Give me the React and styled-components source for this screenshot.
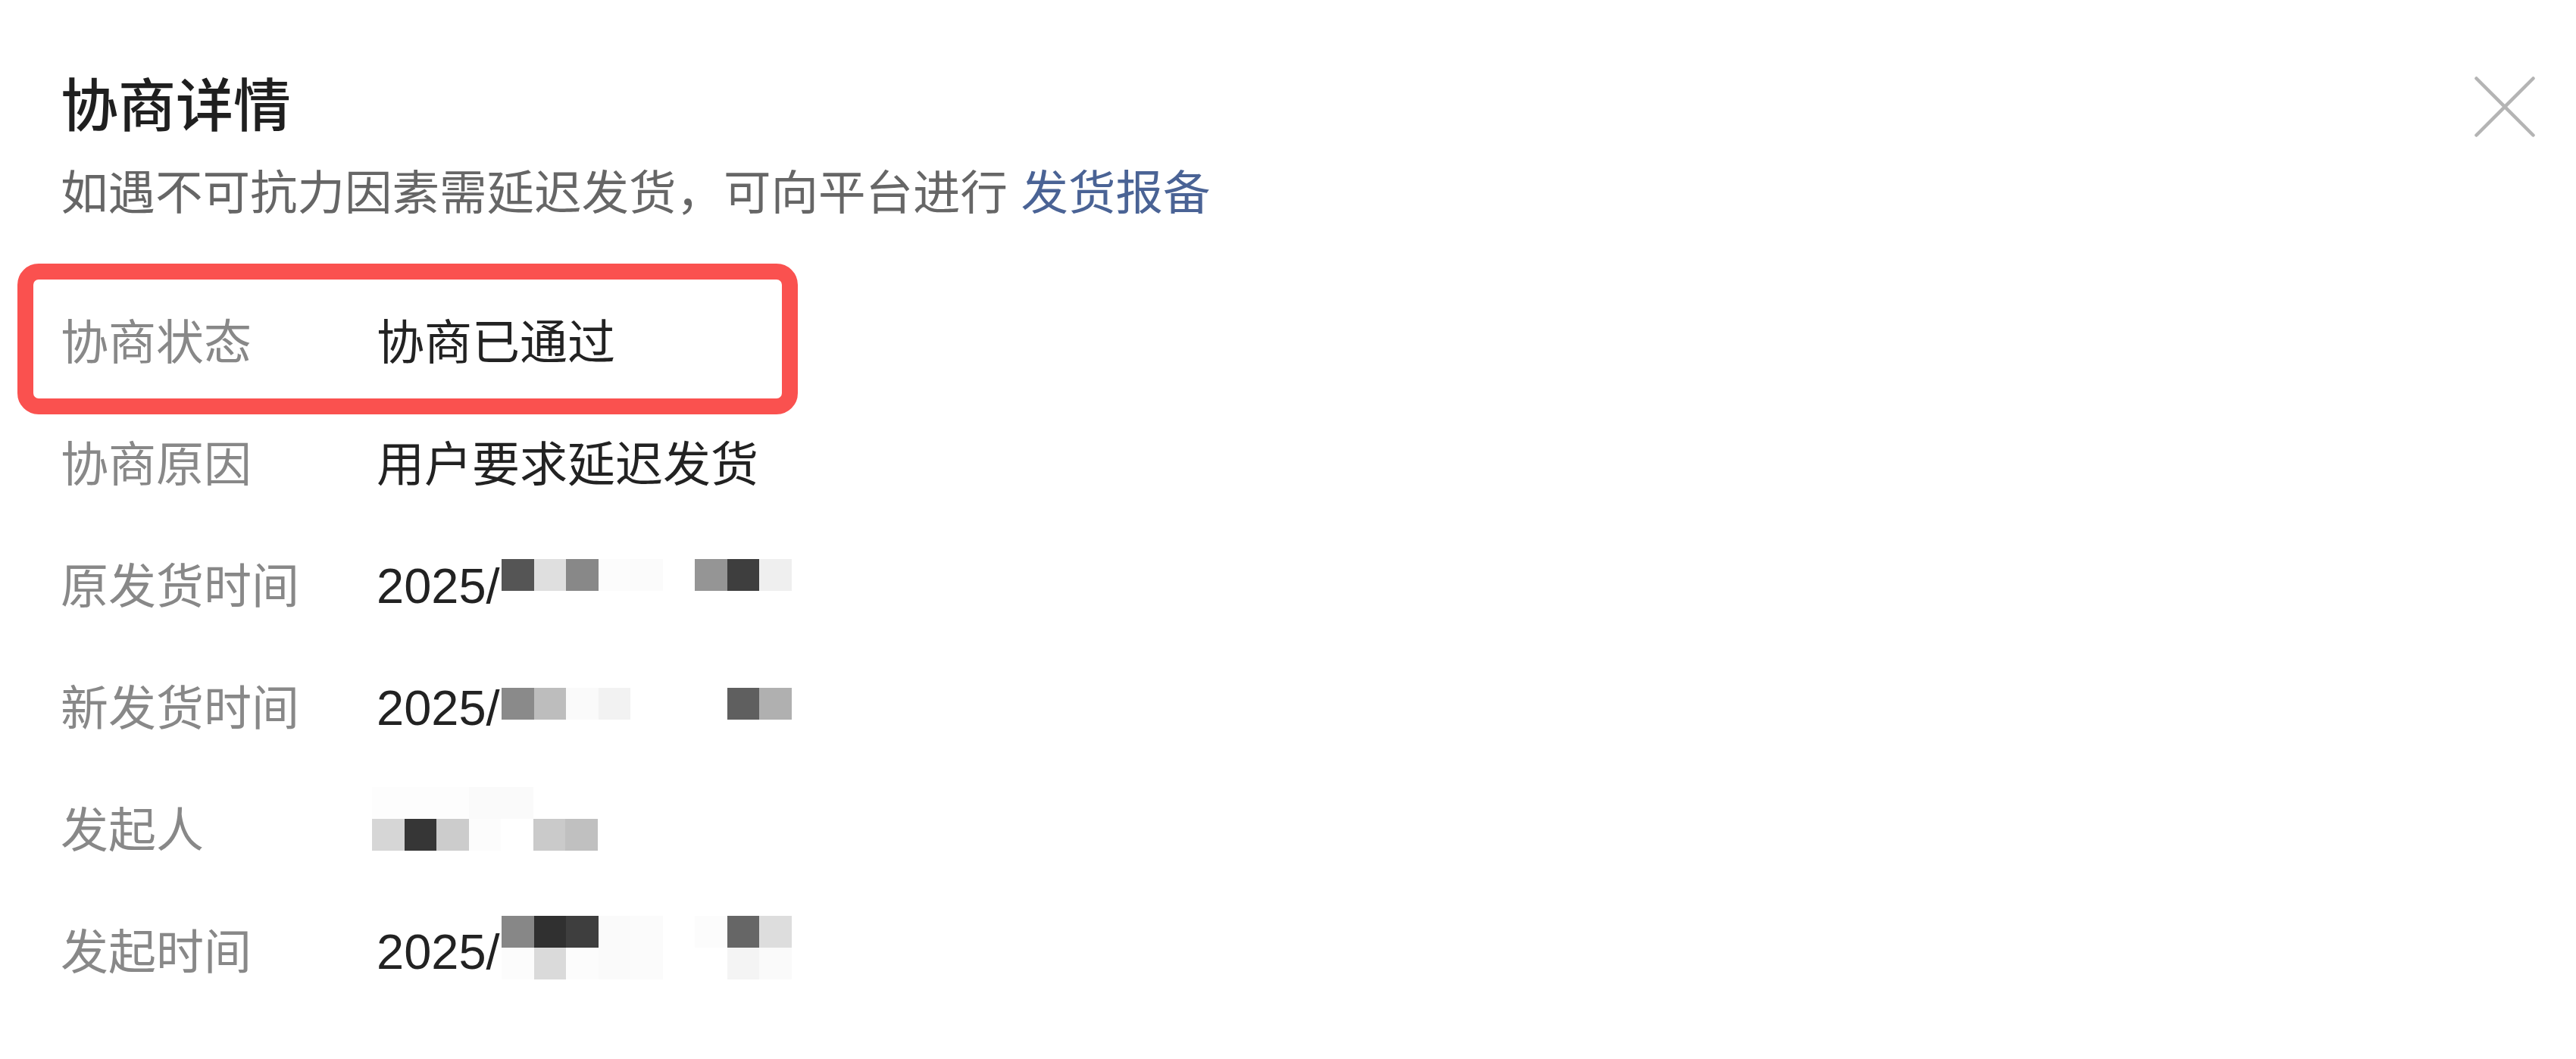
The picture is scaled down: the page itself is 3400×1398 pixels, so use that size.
import React from 'react';
import styled, { createGlobalStyle } from 'styled-components';

const GlobalStyle = createGlobalStyle`
  html, body {
    margin: 0;
    padding: 0;
    background: #ffffff;
  }
  body {
    font-family: "Liberation Sans", "Noto Sans CJK SC", sans-serif;
  }
`;

const Page = styled.div`
  width: 3400px;
  height: 1398px;
  box-sizing: border-box;
  padding: 91px 54px 0 80px;
  background: #ffffff;
`;

const Header = styled.div`
  display: flex;
  align-items: center;
  justify-content: space-between;
`;

const Title = styled.h1`
  margin: 0;
  font-size: 76px;
  line-height: 100px;
  font-weight: 500;
  color: #1f1f1f;
`;

const CloseButton = styled.button`
  display: flex;
  align-items: center;
  justify-content: center;
  width: 80px;
  height: 80px;
  padding: 0;
  border: 0;
  background: transparent;
  cursor: pointer;
`;

const Hint = styled.p`
  margin: 19px 0 0;
  font-size: 62.5px;
  line-height: 90px;
  color: #666666;
`;

const Link = styled.a`
  color: #4a6395;
  text-decoration: none;
`;

const List = styled.div`
  display: flex;
  flex-direction: column;
  margin-top: 71.5px;
`;

const Row = styled.div`
  position: relative;
  display: flex;
  align-items: center;
  height: 161px;
  font-size: 63px;
  line-height: 90px;
`;

const Label = styled.span`
  flex: 0 0 417px;
  color: #888888;
`;

const Value = styled.span`
  color: #222222;
`;

const Digits = styled.span`
  font-size: 65px;
`;

const Highlight = styled.div`
  position: absolute;
  top: -23.5px;
  bottom: -14.5px;
  left: -57px;
  width: 1030px;
  box-sizing: border-box;
  border: 21px solid #fa514f;
  border-radius: 28px;
  pointer-events: none;
`;

const Mosaic = styled.div`
  position: absolute;
  display: flex;
  flex-direction: column;
`;

const MosaicLine = styled.div`
  display: flex;
`;

const Cell = styled.div`
  width: 42.5px;
  height: 42px;
  background: ${({ $shade }) => $shade};
`;

const rows = [
  { label: '协商状态', value: '协商已通过', highlight: true },
  { label: '协商原因', value: '用户要求延迟发货' },
  {
    label: '原发货时间',
    date: '2025/',
    mosaic: {
      left: 582,
      top: 44.5,
      lines: [['#555555', '#dfdfdf', '#888888', '#fcfcfc', '#fbfbfb', '#ffffff', '#959595', '#3e3e3e', '#efefef']],
    },
  },
  {
    label: '新发货时间',
    date: '2025/',
    mosaic: {
      left: 582,
      top: 53.5,
      lines: [['#8a8a8a', '#bdbdbd', '#fafafa', '#f2f2f2', '#ffffff', '#ffffff', '#ffffff', '#5f5f5f', '#b0b0b0']],
    },
  },
  {
    label: '发起人',
    mosaic: {
      left: 411,
      top: 23.5,
      lines: [
        ['#fdfdfd', '#fdfdfd', '#fdfdfd', '#fafafa', '#fafafa', '#ffffff', '#ffffff'],
        ['#d6d6d6', '#363636', '#cccccc', '#fcfcfc', '#ffffff', '#cacaca', '#c0c0c0'],
      ],
    },
  },
  {
    label: '发起时间',
    date: '2025/',
    mosaic: {
      left: 582,
      top: 32.5,
      lines: [
        ['#878787', '#303030', '#3e3e3e', '#fafafa', '#fbfbfb', '#ffffff', '#fcfcfc', '#666666', '#dddddd'],
        ['#fcfcfc', '#dadada', '#fcfcfc', '#fafafa', '#fbfbfb', '#ffffff', '#ffffff', '#f4f4f4', '#fafafa'],
      ],
    },
  },
];

const CloseIcon = () => (
  <svg width="80" height="80" viewBox="0 0 80 80">
    <path
      d="M2.5 2.5 L77.5 77.5 M77.5 2.5 L2.5 77.5"
      stroke="#b4b4b4"
      strokeWidth="4.5"
      strokeLinecap="round"
      fill="none"
    />
  </svg>
);

const App = () => (
  <>
    <GlobalStyle />
    <Page>
      <Header>
        <Title>协商详情</Title>
        <CloseButton aria-label="关闭">
          <CloseIcon />
        </CloseButton>
      </Header>
      <Hint>
        如遇不可抗力因素需延迟发货，可向平台进行 <Link href="#">发货报备</Link>
      </Hint>
      <List>
        {rows.map((row) => (
          <Row key={row.label}>
            {row.highlight && <Highlight />}
            <Label>{row.label}</Label>
            <Value>
              {row.value}
              {row.date && <Digits>{row.date}</Digits>}
            </Value>
            {row.mosaic && (
              <Mosaic style={{ left: row.mosaic.left, top: row.mosaic.top }}>
                {row.mosaic.lines.map((line, i) => (
                  <MosaicLine key={i}>
                    {line.map((shade, j) => (
                      <Cell key={j} $shade={shade} />
                    ))}
                  </MosaicLine>
                ))}
              </Mosaic>
            )}
          </Row>
        ))}
      </List>
    </Page>
  </>
);

export default App;
